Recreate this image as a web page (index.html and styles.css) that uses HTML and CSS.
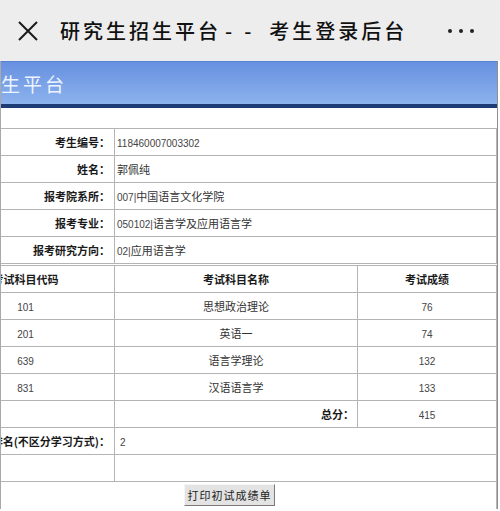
FILE: index.html
```html
<!DOCTYPE html>
<html lang="zh-CN">

<head>
    <meta charset="UTF-8">
    <meta name="viewport" content="width=device-width, initial-scale=1.0">
    <title>研究生招生平台--考生登录后台</title>
    <link rel="stylesheet" href="styles.css">
</head>

<body>
    <div class="topbar">
        <svg class="close-icon" width="22" height="22" viewBox="0 0 22 22">
            <path d="M2 2 L20 20 M20 2 L2 20" stroke="#1a1a1a" stroke-width="2" fill="none" />
        </svg>
        <span class="page-title">研究生招生平台<span class="sep">--</span>考生登录后台</span>
        <span class="more-dots"><i></i><i></i><i></i></span>
    </div>

    <div class="frame">
        <div class="sheet">
            <div class="banner"><span class="banner-title">研究生招生平台</span></div>

            <table class="info">
                <tr>
                    <td class="label">考生编号：</td>
                    <td class="value"><span class="num">118460007003302</span></td>
                </tr>
                <tr>
                    <td class="label">姓名：</td>
                    <td class="value">郭佩纯</td>
                </tr>
                <tr>
                    <td class="label">报考院系所：</td>
                    <td class="value"><span class="num">007|</span>中国语言文化学院</td>
                </tr>
                <tr>
                    <td class="label">报考专业：</td>
                    <td class="value"><span class="num">050102|</span>语言学及应用语言学</td>
                </tr>
                <tr>
                    <td class="label">报考研究方向：</td>
                    <td class="value"><span class="num">02|</span>应用语言学</td>
                </tr>
            </table>

            <table class="scores">
                <tr class="head">
                    <td class="col-code">考试科目代码</td>
                    <td class="col-name">考试科目名称</td>
                    <td>考试成绩</td>
                </tr>
                <tr>
                    <td><span class="num">101</span></td>
                    <td>思想政治理论</td>
                    <td><span class="num">76</span></td>
                </tr>
                <tr>
                    <td><span class="num">201</span></td>
                    <td>英语一</td>
                    <td><span class="num">74</span></td>
                </tr>
                <tr>
                    <td><span class="num">639</span></td>
                    <td>语言学理论</td>
                    <td><span class="num">132</span></td>
                </tr>
                <tr>
                    <td><span class="num">831</span></td>
                    <td>汉语语言学</td>
                    <td><span class="num">133</span></td>
                </tr>
                <tr>
                    <td></td>
                    <td class="total-label">总分：</td>
                    <td><span class="num">415</span></td>
                </tr>
                <tr>
                    <td class="label">排名(不区分学习方式)：</td>
                    <td class="value" colspan="2"><span class="num">2</span></td>
                </tr>
                <tr>
                    <td></td>
                    <td colspan="2"></td>
                </tr>
                <tr>
                    <td class="actions" colspan="3">
                        <button type="button" class="print-btn">打印初试成绩单</button>
                    </td>
                </tr>
            </table>
        </div>
    </div>
</body>

</html>
```

FILE: styles.css
```css
body {
    margin: 0;
    width: 500px;
    font-family: "Noto Sans CJK SC", sans-serif;
    background: #fff;
    color: #222;
}

.topbar {
    height: 61px;
    display: flex;
    align-items: center;
    background: #ededed;
}

.close-icon {
    margin-left: 17px;
    flex: none;
}

.page-title {
    margin-left: 21px;
    font-size: 20px;
    font-weight: 500;
    letter-spacing: 3px;
    color: #111;
    white-space: nowrap;
}

.page-title .sep {
    margin: 0 6px 0 4px;
    letter-spacing: 12px;
}

.more-dots {
    margin-left: auto;
    margin-right: 26px;
    display: flex;
    gap: 7px;
}

.more-dots i {
    width: 4px;
    height: 4px;
    border-radius: 50%;
    background: #222;
}

.frame {
    margin-right: 2px;
    border-left: 1px solid #a9a9a9;
    border-right: 1px solid #8f8f8f;
    overflow: hidden;
}

.sheet {
    margin-left: -89px;
}

.banner {
    height: 42px;
    display: flex;
    align-items: center;
    padding-left: 1px;
    background: linear-gradient(#6790e0, #8cb3ed);
    border-top: 1px solid #5a82d4;
    border-bottom: 4px solid #1d3b74;
    box-sizing: content-box;
}

.banner-title {
    font-size: 19px;
    letter-spacing: 3px;
    color: #eef4ff;
    white-space: nowrap;
}

table {
    margin-left: 24px;
    width: calc(100% - 24px);
    border-collapse: collapse;
    table-layout: fixed;
    font-size: 11px;
}

td {
    height: 26px;
    padding: 0 4px;
    border: 1px solid #b4b4b4;
    color: #333;
    white-space: nowrap;
}

.info {
    margin-top: 20px;
}

.info .label {
    width: 169px;
}

.label {
    text-align: right;
    font-weight: 700;
    color: #1a1a1a;
}

.value {
    padding-left: 2px;
}

.num {
    font-family: "Liberation Sans Narrow", "Liberation Sans", sans-serif;
    font-size: 10px;
    color: #444;
}

.scores {
    margin-top: 1px;
}

.scores td {
    text-align: center;
}

.scores .col-code {
    width: 169px;
}

.scores .col-name {
    width: 234px;
}

.scores .head td {
    font-weight: 700;
    color: #1a1a1a;
}

.scores .label {
    text-align: right;
}

.scores .value {
    text-align: left;
    padding-left: 5px;
}

.scores .total-label {
    text-align: right;
    padding-right: 3px;
    font-weight: 700;
    color: #1a1a1a;
}

.scores .actions {
    height: 25px;
    padding: 2px 0 0 26px;
    vertical-align: top;
    border-bottom: none;
}

.print-btn {
    width: 91px;
    height: 22px;
    padding: 0;
    font-family: "Noto Sans CJK SC", sans-serif;
    font-size: 11px;
    letter-spacing: 1px;
    color: #222;
    background: #e3e3e3;
    border: 1px solid;
    border-color: #f6f6f6 #7a7a7a #7a7a7a #f6f6f6;
}
```
